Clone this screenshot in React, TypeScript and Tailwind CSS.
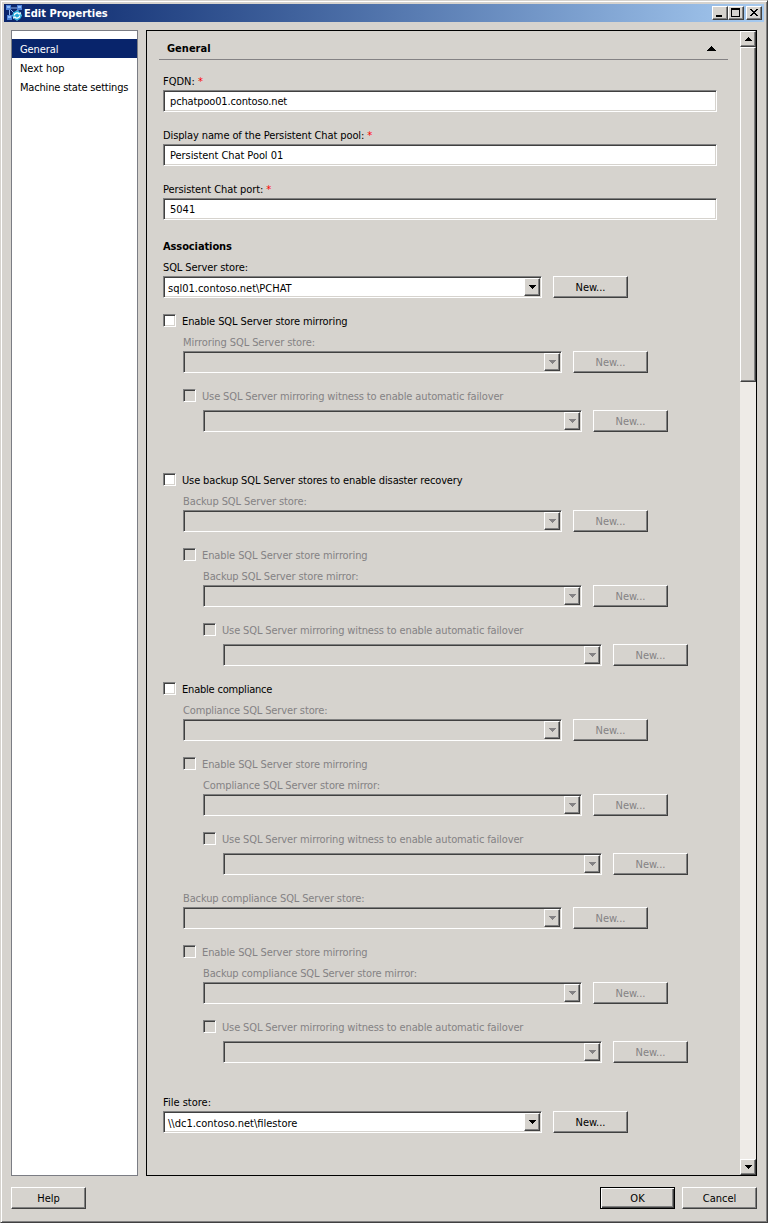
import React from "react";

const raised =
  "border border-t-white border-l-white border-r-[#404040] border-b-[#404040] shadow-[inset_-1px_-1px_0_#808080] bg-[#d6d3ce]";
const sunken =
  "border border-t-[#808080] border-l-[#808080] border-r-white border-b-white shadow-[inset_1px_1px_0_#404040,inset_-1px_-1px_0_#d6d3ce]";

function Down({ className = "" }: { className?: string }) {
  return (
    <svg width="7" height="4" viewBox="0 0 7 4" fill="currentColor" shapeRendering="crispEdges" className={className}>
      <path d="M0 0h7v1H0zM1 1h5v1H1zM2 2h3v1H2zM3 3h1v1H3z" />
    </svg>
  );
}

function Button({ children, disabled, primary }: { children: React.ReactNode; disabled?: boolean; primary?: boolean }) {
  return (
    <button
      className={`flex h-[22px] w-[75px] shrink-0 items-center justify-center pt-[2px] ${
        primary
          ? "border border-black bg-[#d6d3ce] shadow-[inset_1px_1px_0_#fff,inset_-1px_-1px_0_#404040,inset_-2px_-2px_0_#808080]"
          : raised
      } ${disabled ? "text-[#848284]" : "text-black"}`}
    >
      {children}
    </button>
  );
}

function Label({ children, className = "tracking-[-0.1px]", required, disabled }: { children: React.ReactNode; className?: string; required?: boolean; disabled?: boolean }) {
  return (
    <div className={`h-[14px] leading-4 whitespace-pre ${disabled ? "text-[#848284]" : ""} ${className}`}>
      {children}
      {required && <span className="text-[#f00]"> *</span>}
    </div>
  );
}

function Input({ value, className = "" }: { value: string; className?: string }) {
  return <div className={`mt-[2px] flex h-[22px] w-[554px] items-center bg-white pt-[2px] pl-[6px] ${sunken} ${className}`}>{value}</div>;
}

function Combo({ value, className = "mt-[2px]" }: { value?: string; className?: string }) {
  return (
    <div className={`flex gap-[11px] ${className}`}>
      <div className={`flex h-[22px] w-[379px] items-center justify-between p-[1px] pl-1 ${sunken} ${value ? "bg-white" : ""}`}>
        <span className="pt-[3px]">{value}</span>
        <span className={`flex h-[18px] w-4 items-center justify-center ${raised} ${value ? "text-black" : "text-[#848284]"}`}>
          <Down />
        </span>
      </div>
      <Button disabled={!value}>New...</Button>
    </div>
  );
}

function Check({ children, className = "mt-4 tracking-[-0.1px]", disabled }: { children: React.ReactNode; className?: string; disabled?: boolean }) {
  return (
    <div className={`flex h-[14px] items-start gap-[6px] whitespace-nowrap ${disabled ? "text-[#848284]" : ""} ${className}`}>
      <span className={`size-[13px] ${sunken} ${disabled ? "" : "bg-white"}`} />
      <span className="leading-4">{children}</span>
    </div>
  );
}

const WITNESS = "Use SQL Server mirroring witness to enable automatic failover";

function MirrorGroup({ label }: { label: string }) {
  return (
    <>
      <Check disabled>Enable SQL Server store mirroring</Check>
      <div className="pl-5">
        <Label disabled className="mt-[7px] tracking-[-0.12px]">{label}</Label>
        <Combo />
        <Check disabled className="mt-4 tracking-[-0.13px]">{WITNESS}</Check>
        <div className="pl-5">
          <Combo className="mt-[7px]" />
        </div>
      </div>
    </>
  );
}

function TitleBar() {
  return (
    <div className="flex h-[18px] items-center bg-linear-to-r from-[#0a246a] to-[#a6caf0] pr-[2px] pl-[2px] text-white">
      <svg width="16" height="16" viewBox="0 0 16 16">
        <path d="M5 3h6M3.500 5v6M12 5v3M5 5l5 5" stroke="#8fb2e8" strokeWidth="1" fill="none" />
        <path d="M0 0h5v5H0zM11 0h5v5h-5zM1 10h5v5H1z" fill="#4b83da" />
        <path d="M1 1h3v2H1zM12 1h3v2h-3zM2 11h3v2H2z" fill="#8dbaf8" />
        <path d="M11 5l5 5.500-5 5.500-5-5.500z" fill="#7fdcf2" />
        <circle cx="11" cy="10.500" r="4.600" fill="#25aad8" />
        <path d="M8.200 10.500a2.900 2.900 0 0 1 5-1.700M13.800 10.500a2.900 2.900 0 0 1-5 1.700" fill="none" stroke="#fff" strokeWidth="1.300" />
        <path d="M12 9.500h2.800V7zM10 11.500H7.200V14z" fill="#fff" />
      </svg>
      <span className="ml-[2px] flex-1 pt-[2px] text-[11px] font-bold">Edit Properties</span>
      <button className={`flex h-[14px] w-4 items-end pb-[2px] pl-[3px] ${raised}`}>
        <span className="h-[2px] w-[6px] bg-black" />
      </button>
      <button className={`flex h-[14px] w-4 justify-center pt-[1px] pr-[1px] ${raised}`}>
        <span className="h-[9px] w-[9px] border border-t-2 border-black" />
      </button>
      <button className={`ml-[2px] flex h-[14px] w-4 items-start justify-center pt-[2px] text-black ${raised}`}>
        <svg width="8" height="7" viewBox="0 0 8 7" shapeRendering="crispEdges">
          <path d="M0 0h2v1H0zM6 0h2v1H6zM1 1h2v1H1zM5 1h2v1H5zM2 2h4v1H2zM3 3h2v1H3zM2 4h4v1H2zM1 5h2v1H1zM5 5h2v1H5zM0 6h2v1H0zM6 6h2v1H6z" />
        </svg>
      </button>
    </div>
  );
}

export default function App() {
  return (
    <div className="flex h-[1223px] w-[768px] flex-col border border-t-[#d6d3ce] border-r-[#404040] border-b-[#404040] border-l-[#d6d3ce] bg-[#d6d3ce] p-[3px] font-['DejaVu_Sans_Condensed','DejaVu_Sans',sans-serif] text-[11px] leading-[14px] text-black shadow-[inset_1px_1px_0_#fff,inset_-1px_-1px_0_#808080]">
      <TitleBar />
      <div className="mt-2 flex h-[1146px] gap-2 pr-[7px] pl-[7px]">
        <nav className="w-[127px] shrink-0 border border-[#7b7d84] bg-white pt-2">
          <div className="flex h-[19px] items-center bg-[#08246b] pt-[2px] pl-2 text-white tracking-[-0.1px]">General</div>
          <div className="flex h-[19px] items-center pt-[2px] pl-2 tracking-[-0.05px]">Next hop</div>
          <div className="flex h-[19px] items-center pt-[2px] pl-2 tracking-[-0.18px]">Machine state settings</div>
        </nav>
        <main className="flex min-w-0 flex-1 border border-black">
          <div className="flex-1 pl-3">
            <div className="mr-3 flex h-[29px] items-center justify-between border-b border-[#848284] pt-[6px] pr-3 pl-2">
              <span className="pt-px font-bold">General</span>
              <svg width="9" height="5" viewBox="0 0 9 5" shapeRendering="crispEdges">
                <path d="M4 0h1v1H4zM3 1h3v1H3zM2 2h5v1H2zM1 3h7v1H1zM0 4h9v1H0z" />
              </svg>
            </div>
            <div className="pl-1">
              <Label required className="mt-[14px]">FQDN:</Label>
              <Input value="pchatpoo01.contoso.net" className="tracking-[-0.14px]" />
              <Label required className="mt-4 tracking-[-0.11px]">Display name of the Persistent Chat pool:</Label>
              <Input value="Persistent Chat Pool 01" className="tracking-[-0.06px]" />
              <Label required className="mt-4 tracking-[-0.08px]">Persistent Chat port:</Label>
              <Input value="5041" />
              <Label className="mt-[19px] font-bold tracking-[-0.1px]">Associations</Label>
              <Label className="mt-[7px] tracking-[-0.1px]">SQL Server store:</Label>
              <Combo value="sql01.contoso.net\PCHAT" />

              <Check>Enable SQL Server store mirroring</Check>
              <div className="pl-5">
                <Label disabled className="mt-[7px] tracking-[-0.08px]">Mirroring SQL Server store:</Label>
                <Combo />
                <Check disabled className="mt-4 tracking-[-0.13px]">{WITNESS}</Check>
                <div className="pl-5">
                  <Combo className="mt-[7px]" />
                </div>
              </div>

              <Check className="mt-[41px] tracking-[-0.13px]">Use backup SQL Server stores to enable disaster recovery</Check>
              <div className="pl-5">
                <Label disabled className="mt-[7px] tracking-[-0.1px]">Backup SQL Server store:</Label>
                <Combo />
                <MirrorGroup label="Backup SQL Server store mirror:" />
              </div>

              <Check className="mt-4 tracking-[-0.2px]">Enable compliance</Check>
              <div className="pl-5">
                <Label disabled className="mt-[7px] tracking-[-0.13px]">Compliance SQL Server store:</Label>
                <Combo />
                <MirrorGroup label="Compliance SQL Server store mirror:" />
                <Label disabled className="mt-4 tracking-[-0.13px]">Backup compliance SQL Server store:</Label>
                <Combo />
                <MirrorGroup label="Backup compliance SQL Server store mirror:" />
              </div>

              <Label className="mt-8">File store:</Label>
              <Combo value="\\dc1.contoso.net\filestore" />
            </div>
          </div>
          <div className="flex w-4 shrink-0 flex-col bg-[#eeebe7]">
            <div className={`flex h-4 items-center justify-center ${raised}`}>
              <Down className="rotate-180" />
            </div>
            <div className={`h-[335px] ${raised}`} />
            <div className="flex-1" />
            <div className={`flex h-4 items-center justify-center ${raised}`}>
              <Down />
            </div>
          </div>
        </main>
      </div>
      <div className="mt-[11px] flex gap-[7px] pr-[7px] pl-[7px]">
        <Button>Help</Button>
        <div className="flex-1" />
        <Button primary>OK</Button>
        <Button>Cancel</Button>
      </div>
    </div>
  );
}
